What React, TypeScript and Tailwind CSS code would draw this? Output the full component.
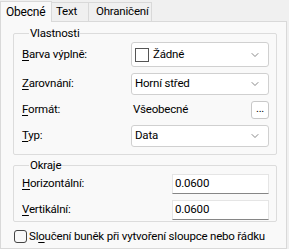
import { ChevronDown } from "lucide-react";

function Ul({ text }: { text: string }) {
  // first letter underlined (access key)
  return (
    <span>
      <span className="underline underline-offset-2">{text[0]}</span>
      {text.slice(1)}
    </span>
  );
}

function Combo({ value, swatch }: { value: string; swatch?: boolean }) {
  return (
    <div
      className={`w-[138px] ${swatch ? "h-[25px]" : "h-[22px]"} bg-white border border-[#d0d0d0] rounded-[3px] flex items-center pl-[3px] pr-[7px]`}
    >
      {swatch && <div className="w-[14px] h-[14px] border border-[#555] bg-white mr-[4px]" />}
      <span className="flex-1">{value}</span>
      <ChevronDown className="w-[12px] h-[12px] text-[#606060]" strokeWidth={1.5} />
    </div>
  );
}

function NumInput({ value }: { value: string }) {
  return (
    <div className="w-[97px] h-[20px] bg-white border border-[#e5e5e5] border-b-[#868686] flex items-center pl-[2px]">
      {value}
    </div>
  );
}

export default function App() {
  return (
    <div
      className="w-[289px] h-[249px] bg-[#f0f0f0] text-[11.5px] tracking-[-0.2px] text-black flex flex-col overflow-hidden whitespace-nowrap"
      style={{ fontFamily: 'Roboto, "Noto Sans", sans-serif' }}
    >
      {/* tabs */}
      <div className="h-[21px] flex items-end">
        <div className="h-[21px] w-[52px] bg-[#f9f9f9] border border-b-0 border-[#d9d9d9] flex items-center pl-[5px] text-[12px] relative z-10 -mb-px">
          Obecné
        </div>
        <div className="h-[19px] w-[37px] border-t border-r border-[#d9d9d9] flex items-center pl-[4px]">Text</div>
        <div className="h-[19px] w-[63px] border-t border-r border-[#d9d9d9] flex items-center pl-[7px]">Ohraničení</div>
      </div>

      {/* panel */}
      <div className="flex-1 w-[287px] bg-[#f9f9f9] border border-[#d9d9d9] pt-[4px] pl-[12px] pr-[9px] flex flex-col">
        <fieldset className="border border-[#dcdcdc] rounded-[2px] pl-[8px] pr-[7px] pb-[7px]">
          <legend className="ml-[7px] px-px leading-[14px]">Vlastnosti</legend>
          <div className="flex flex-col gap-[6px] pt-[2px]">
            <div className="flex items-center justify-between">
              <Ul text="Barva výplně:" />
              <Combo value="Žádné" swatch />
            </div>
            <div className="flex items-center justify-between">
              <Ul text="Zarovnání:" />
              <Combo value="Horní střed" />
            </div>
            <div className="flex items-center">
              <span className="w-[111px]">
                <Ul text="Formát:" />
              </span>
              <span className="flex-1">Všeobecné</span>
              <div className="w-[18px] h-[18px] bg-white border border-[#c8c8c8] rounded-[3px] flex items-center justify-center leading-none text-[11px] pb-[3px]">
                ...
              </div>
            </div>
            <div className="flex items-center justify-between">
              <Ul text="Typ:" />
              <Combo value="Data" />
            </div>
          </div>
        </fieldset>

        <fieldset className="mt-[3px] border border-[#dcdcdc] rounded-[2px] pl-[8px] pr-[7px] pb-[1px]">
          <legend className="ml-[7px] px-px leading-[14px]">Okraje</legend>
          <div className="flex flex-col gap-[6px] pt-[2px]">
            <div className="flex items-center justify-between">
              <Ul text="Horizontální:" />
              <NumInput value="0.0600" />
            </div>
            <div className="flex items-center justify-between">
              <Ul text="Vertikální:" />
              <NumInput value="0.0600" />
            </div>
          </div>
        </fieldset>

        <div className="mt-[6px] flex items-center gap-[2px] pl-[1px]">
          <div className="w-[13px] h-[13px] shrink-0 border border-[#444] rounded-[3px] bg-[#f9f9f9]" />
          <span>
            Sl<span className="underline underline-offset-2">o</span>učení buněk při vytvoření sloupce nebo řádku
          </span>
        </div>
      </div>
    </div>
  );
}
